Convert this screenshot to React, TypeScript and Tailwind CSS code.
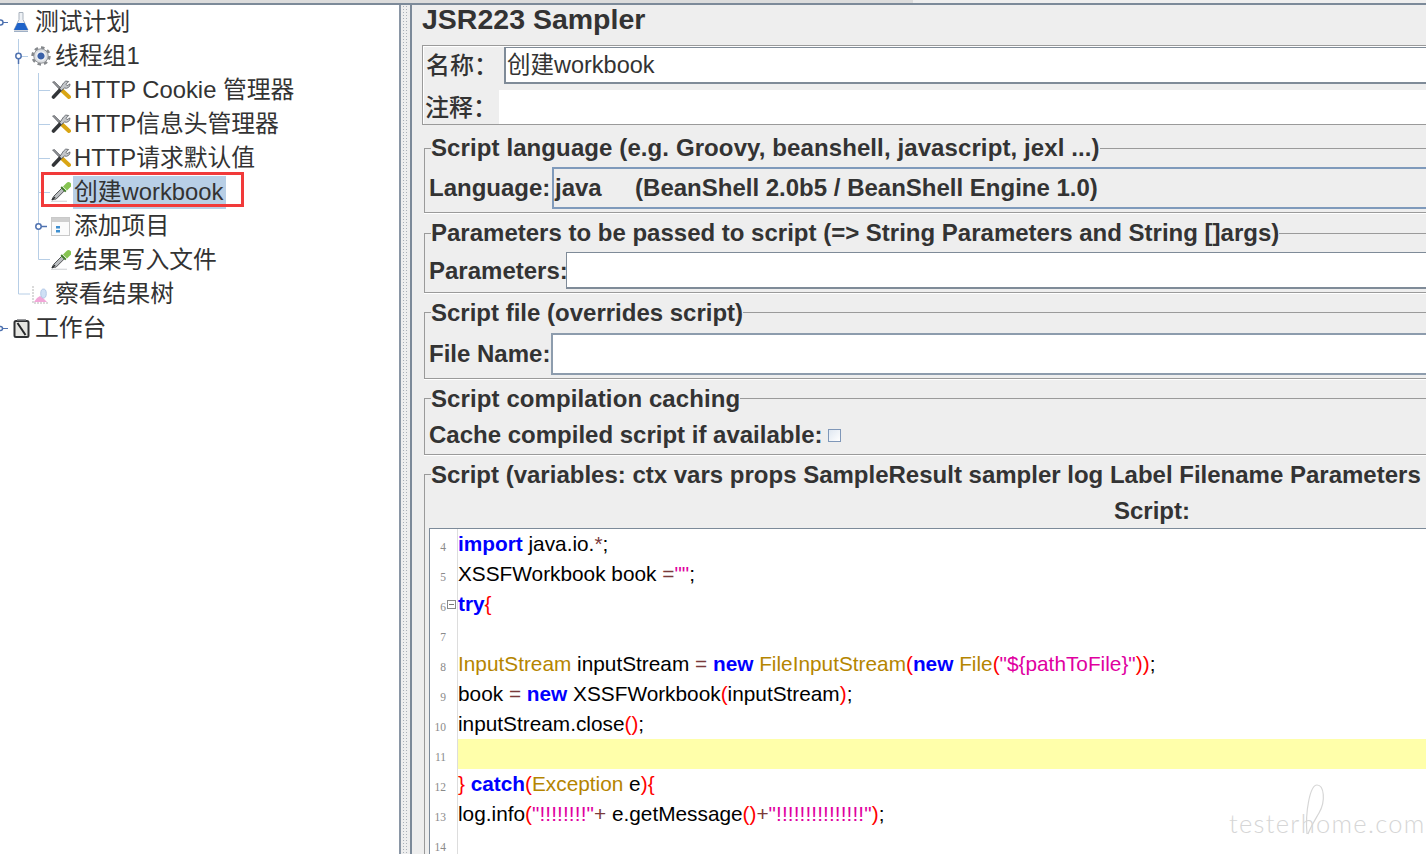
import React from "react";

const cjk = "font-['Liberation_Sans','Noto_Sans_CJK_SC',sans-serif]";

function Flask() {
  return (
    <svg width="16" height="22" viewBox="0 0 16 22">
      <path d="M6 1.500h4v7l5 10.500H1L6 8.500z" fill="#eef1f5" stroke="#a9b2bd" strokeWidth="1" />
      <path d="M4.500 12h7l3.500 7H1z" fill="#1f63c9" />
      <path d="M1 20.500h14" stroke="#9fb0c6" strokeWidth="1" />
    </svg>
  );
}
function Gear() {
  return (
    <svg width="20" height="20" viewBox="0 0 20 20">
      <circle cx="10" cy="10" r="8.200" fill="none" stroke="#85888c" strokeWidth="3" strokeDasharray="3.400 3" />
      <circle cx="10" cy="10" r="7.200" fill="#dcdee1" stroke="#909397" strokeWidth="1" />
      <circle cx="10" cy="10" r="4.200" fill="#3b61a8" stroke="#f6f7f8" strokeWidth="1.200" />
    </svg>
  );
}
function Tools() {
  return (
    <svg width="20" height="20" viewBox="0 0 20 20">
      <path d="M1.500 2l2-.5L10 8l-1.500 1.500z" fill="#8c8f93" stroke="#55585c" strokeWidth=".6" />
      <path d="M10 9.500l8 7.500" stroke="#d9a514" strokeWidth="4" strokeLinecap="round" />
      <path d="M10.500 8.500L2.500 17" stroke="#333538" strokeWidth="3.600" strokeLinecap="round" />
      <path d="M12.500 3a4 4 0 0 1 5.200-1.500L15 4.200l1 1.500 3-1.800a4 4 0 0 1-5.500 4.100L10.500 10.500l-1.800-1.800z" fill="#c3c6ca" stroke="#5b5e63" strokeWidth=".8" />
    </svg>
  );
}
function Dropper() {
  return (
    <svg width="20" height="20" viewBox="0 0 20 20">
      <path d="M0 19.300h16" stroke="#d9dbdd" strokeWidth="1.300" />
      <path d="M1 17.500l1.500-3L10.800 6.200l2.600 2.600-8.300 8.300z" fill="#b9bcbf" stroke="#45474a" strokeWidth=".9" />
      <path d="M1 18l3-3" stroke="#2f3133" strokeWidth="1.400" />
      <path d="M10.200 5l4.600 4.600" stroke="#3f7d25" strokeWidth="1.800" />
      <path d="M12 4.500L15.500 1a2.800 2.800 0 0 1 4 4L16 8.500z" fill="#86c451" />
    </svg>
  );
}
function Logic() {
  return (
    <svg width="19" height="19" viewBox="0 0 19 19">
      <rect x=".5" y=".5" width="18" height="18" fill="#fbfbfb" stroke="#c9c9c9" />
      <rect x="1" y="1" width="17" height="4" fill="#cfcfcf" />
      <rect x="5" y="9" width="4" height="2.500" fill="#3f8fd0" />
      <rect x="5" y="13" width="4" height="2.500" fill="#3f8fd0" />
    </svg>
  );
}
function Graph() {
  return (
    <svg width="17" height="20" viewBox="0 0 17 20">
      <path d="M1 2v17h16" fill="none" stroke="#b5b5b5" strokeWidth="1" strokeDasharray="2 1" />
      <path d="M2 18l3-4 3-2 3 2 4 4z" fill="#f2a6d8" />
      <ellipse cx="11.500" cy="9.500" rx="2.800" ry="4.500" fill="#cfe0f5" stroke="#9db8dd" strokeWidth=".7" />
    </svg>
  );
}
function Bench() {
  return (
    <svg width="17" height="19" viewBox="0 0 17 19">
      <rect x="1.500" y="2" width="14" height="16" rx="1.500" fill="#e6e6e2" stroke="#2f3133" strokeWidth="2" />
      <path d="M4 1h9" stroke="#77797c" strokeWidth="1.500" />
      <path d="M4.500 4l8 12" stroke="#26282a" strokeWidth="2" />
    </svg>
  );
}

function TreeLines() {
  const c = "#b7cee6";
  const h = "#4f72b0";
  return (
    <svg className="absolute left-0 top-[-5px]" width="100" height="340" viewBox="0 0 100 340">
      <path d="M18.500 39V294H30M38.500 73V259.500H50M38 90.500H50M38 124.500H50M38 158.500H50M38 192.500H50" fill="none" stroke={c} strokeWidth="1" />
      <path d="M0 22.500H8M0 328.500H8" stroke={h} strokeWidth="1" />
      <circle cx="0.500" cy="22.500" r="2.500" fill="#fff" stroke={h} strokeWidth="1.500" />
      <circle cx="0.500" cy="328.500" r="2" fill="#fff" stroke={h} strokeWidth="1.500" />
      <path d="M18.500 59V64" stroke={h} strokeWidth="1.500" />
      <path d="M21 56.500H28" stroke={c} strokeWidth="1" />
      <circle cx="18.500" cy="56" r="2.700" fill="#fff" stroke={h} strokeWidth="1.500" />
      <path d="M41 226.500H47" stroke={h} strokeWidth="1.500" />
      <circle cx="38.500" cy="226.500" r="2.700" fill="#fff" stroke={h} strokeWidth="1.500" />
    </svg>
  );
}

function Row({ pad, icon, w, children, selected }: { pad: string; icon: React.ReactNode; w: string; children: React.ReactNode; selected?: boolean }) {
  return (
    <div className={`relative flex h-[34px] items-center ${pad}`}>
      <span className={`flex shrink-0 items-center justify-start ${w}`}>{icon}</span>
      {selected ? (
        <>
          <span className="flex h-[33px] items-center bg-[#b8cfe6] pl-[1px] pr-[3px]">{children}</span>
          <span className="absolute left-[41px] top-[-3px] h-[35px] w-[203px] border-[3px] border-[#f13a3a]" />
        </>
      ) : (
        <span className="pl-[1px]">{children}</span>
      )}
    </div>
  );
}

const tk: Record<string, string> = {
  k: "font-bold text-[#0000ff]",
  t: "text-[#b58500]",
  s: "text-[#e000a0]",
  x: "text-[#e000a0] tracking-[0.1px]",
  p: "text-[#ff0000]",
  o: "text-[#7a3a3a]",
  n: "text-black",
};
type L = [string, string][];
const code: [number, L][] = [
  [4, [["k", "import"], ["n", " java.io."], ["o", "*"], ["n", ";"]]],
  [5, [["n", "XSSFWorkbook book "], ["o", "="], ["s", '""'], ["n", ";"]]],
  [6, [["k", "try"], ["p", "{"]]],
  [7, []],
  [8, [["t", "InputStream"], ["n", " inputStream "], ["o", "="], ["n", " "], ["k", "new"], ["n", " "], ["t", "FileInputStream"], ["p", "("], ["k", "new"], ["n", " "], ["t", "File"], ["p", "("], ["s", '"${pathToFile}"'], ["p", "))"], ["n", ";"]]],
  [9, [["n", "book "], ["o", "="], ["n", " "], ["k", "new"], ["n", " XSSFWorkbook"], ["p", "("], ["n", "inputStream"], ["p", ")"], ["n", ";"]]],
  [10, [["n", "inputStream.close"], ["p", "()"], ["n", ";"]]],
  [11, []],
  [12, [["p", "}"], ["n", " "], ["k", "catch"], ["p", "("], ["t", "Exception"], ["n", " e"], ["p", "){"]]],
  [13, [["n", "log.info"], ["p", "("], ["x", '"!!!!!!!!"'], ["o", "+"], ["n", " e.getMessage"], ["p", "()"], ["o", "+"], ["x", '"!!!!!!!!!!!!!!!"'], ["p", ")"], ["n", ";"]]],
  [14, []],
];

function Group({ title, className, legend, children }: { title: string; className: string; legend: string; children: React.ReactNode }) {
  return (
    <fieldset className={`ml-[2px] w-[1456px] shrink-0 border border-[#9a9a9a] shadow-[0_1px_0_#ffffff] ${className}`}>
      <legend className={`ml-[6px] h-[30px] whitespace-pre text-[24px] font-bold text-[#333333] ${legend}`}>{title}</legend>
      {children}
    </fieldset>
  );
}

export default function App() {
  return (
    <div className={`relative flex h-[854px] w-[1426px] flex-col overflow-hidden bg-[#eeeeee] ${cjk}`}>
      <div className="flex h-[3px] shrink-0">
        <div className="w-[913px] bg-[#dcdcdc]" />
      </div>
      <div className="flex min-h-0 flex-1 border-t-2 border-[#7c8a99]">
        <div className="relative w-[399px] shrink-0 bg-white text-[23.8px] leading-[34px] text-[#333333]">
          <TreeLines />
          <Row pad="pl-[13px]" w="w-[21px]" icon={<Flask />}>测试计划</Row>
          <Row pad="pl-[31px]" w="w-[23px]" icon={<Gear />}>线程组1</Row>
          <Row pad="pl-[51px]" w="w-[22px]" icon={<Tools />}>HTTP Cookie 管理器</Row>
          <Row pad="pl-[51px]" w="w-[22px]" icon={<Tools />}>HTTP信息头管理器</Row>
          <Row pad="pl-[51px]" w="w-[22px]" icon={<Tools />}>HTTP请求默认值</Row>
          <Row pad="pl-[51px]" w="w-[22px]" icon={<Dropper />} selected>创建workbook</Row>
          <Row pad="pl-[51px]" w="w-[22px]" icon={<Logic />}>添加项目</Row>
          <Row pad="pl-[51px]" w="w-[22px]" icon={<Dropper />}>结果写入文件</Row>
          <Row pad="pl-[32px]" w="w-[22px]" icon={<Graph />}>察看结果树</Row>
          <Row pad="pl-[13px]" w="w-[21px]" icon={<Bench />}>工作台</Row>
        </div>
        <div className="w-[2px] shrink-0 bg-[#8a96a5]" />
        <div className="w-[9px] shrink-0 bg-[#eeeeee] bg-[radial-gradient(circle,#a9b0b8_0.7px,transparent_0.8px)] bg-[length:3px_3px] bg-[position:1px_0] [background-clip:content-box] px-[1px]" />
        <div className="relative flex min-w-0 flex-1 flex-col border-l-2 border-[#7c8a99] pl-[10px]">
          <h1 className="h-[30px] shrink-0 text-[28.5px] font-bold leading-[28px] text-[#333333]">JSR223 Sampler</h1>
          <div className="mt-[10px] flex h-[80px] w-[1458px] shrink-0 flex-col border border-[#9a9a9a] text-[23.5px] text-[#333333] shadow-[inset_1px_1px_0_#ffffff]">
            <div className="mt-[1px] flex h-[37px] items-center">
              <span className="w-[81px] shrink-0 pl-[3px] pt-[1px] text-[24px] font-medium">名称：</span>
              <div className="flex h-full flex-1 items-center border-l-2 border-t border-b-2 border-[#7f8b98] bg-white pl-[1px] pt-[1px]">创建workbook</div>
            </div>
            <div className="mt-[6px] flex h-[34px] items-center">
              <span className="w-[76px] shrink-0 pl-[2px] pt-[2px] text-[24px] font-medium">注释：</span>
              <div className="h-full flex-1 bg-white" />
            </div>
          </div>

          <Group title="Script language (e.g. Groovy, beanshell, javascript, jexl ...)" legend="leading-[29px] tracking-[0.1px]" className="mt-[8px] h-[80px]">
            <div className="mt-[4px] flex h-[42px] items-center text-[24px] font-bold text-[#333333]">
              <span className="w-[127px] shrink-0 pl-[4px]">Language:</span>
              <div className="flex h-full flex-1 items-center whitespace-pre border-2 border-[#7f9abb] pl-[1px]">java     (BeanShell 2.0b5 / BeanShell Engine 1.0)</div>
            </div>
          </Group>
          <Group title="Parameters to be passed to script (=> String Parameters and String []args)" legend="leading-[29px]" className="mt-[5px] h-[75px]">
            <div className="mt-[4px] flex h-[37px] items-center text-[24px] font-bold text-[#333333]">
              <span className="w-[141px] shrink-0 pl-[4px] pt-[1px]">Parameters:</span>
              <div className="h-full flex-1 border-l border-t border-b-2 border-[#7f8b98] bg-white" />
            </div>
          </Group>
          <Group title="Script file (overrides script)" legend="leading-[31px]" className="mt-[4px] h-[82px]">
            <div className="mt-[6px] flex h-[42px] items-center text-[24px] font-bold text-[#333333]">
              <span className="w-[126px] shrink-0 pl-[4px]">File Name:</span>
              <div className="h-full flex-1 border-2 border-[#8d9cad] bg-white" />
            </div>
          </Group>
          <Group title="Script compilation caching" legend="leading-[31px] tracking-[0.1px]" className="mt-[4px] h-[72px]">
            <div className="mt-[7px] flex h-[30px] items-center text-[24px] font-bold text-[#333333]">
              <span className="shrink-0 pl-[4px]">Cache compiled script if available:</span>
              <span className="ml-[6px] h-[13px] w-[13px] border border-[#7f97b8] bg-[linear-gradient(135deg,#dfe7f1,#ffffff)]" />
            </div>
          </Group>
          <Group title="Script (variables: ctx vars props SampleResult sampler log Label Filename Parameters args[] bsh.shared)" legend="leading-[31px]" className="mt-[4px] h-[420px]">
            <div className="mt-[7px] h-[30px] text-center text-[24px] font-bold leading-[30px] text-[#333333]">Script:</div>
            <div className="ml-[4px] mt-[2px] border-l border-t border-[#7c8a99] bg-white text-[20.8px] text-black">
              {code.map(([n, toks]) => (
                <div key={n} className="flex h-[30px]">
                  <div className="flex w-[16px] shrink-0 items-end justify-end pb-[5px] font-['Liberation_Serif',serif] text-[11.5px] leading-[14px] text-[#8a8a8a]">{n}</div>
                  <div className="flex w-[12px] shrink-0 items-center border-r border-[#dddddd]">
                    {n === 6 && (
                      <span className="ml-[1px] flex h-[9px] w-[9px] items-center justify-center border border-[#8a8a8a]">
                        <span className="h-px w-[5px] bg-[#777777]" />
                      </span>
                    )}
                  </div>
                  <div className={`flex-1 whitespace-pre leading-[30px] ${n === 11 ? "bg-[#ffffaa]" : ""}`}>
                    {toks.map(([c, s], i) => (
                      <span key={i} className={tk[c]}>{s}</span>
                    ))}
                  </div>
                </div>
              ))}
            </div>
          </Group>
        </div>
      </div>
      <div className="pointer-events-none absolute left-[1229px] top-[806px] font-['Lato',sans-serif] text-[25.5px] font-light leading-[34px] tracking-[1.3px] text-[#d6d6d6]">testerhome.com</div>
      <svg className="pointer-events-none absolute left-[1300px] top-[782px]" width="30" height="56" viewBox="0 0 30 56">
        <path d="M7 52C5 30 10 3 17 3c7 0 9 16 2 28-4 7-8 13-11 21" fill="none" stroke="#d6d6d6" strokeWidth="1.200" />
      </svg>
    </div>
  );
}
